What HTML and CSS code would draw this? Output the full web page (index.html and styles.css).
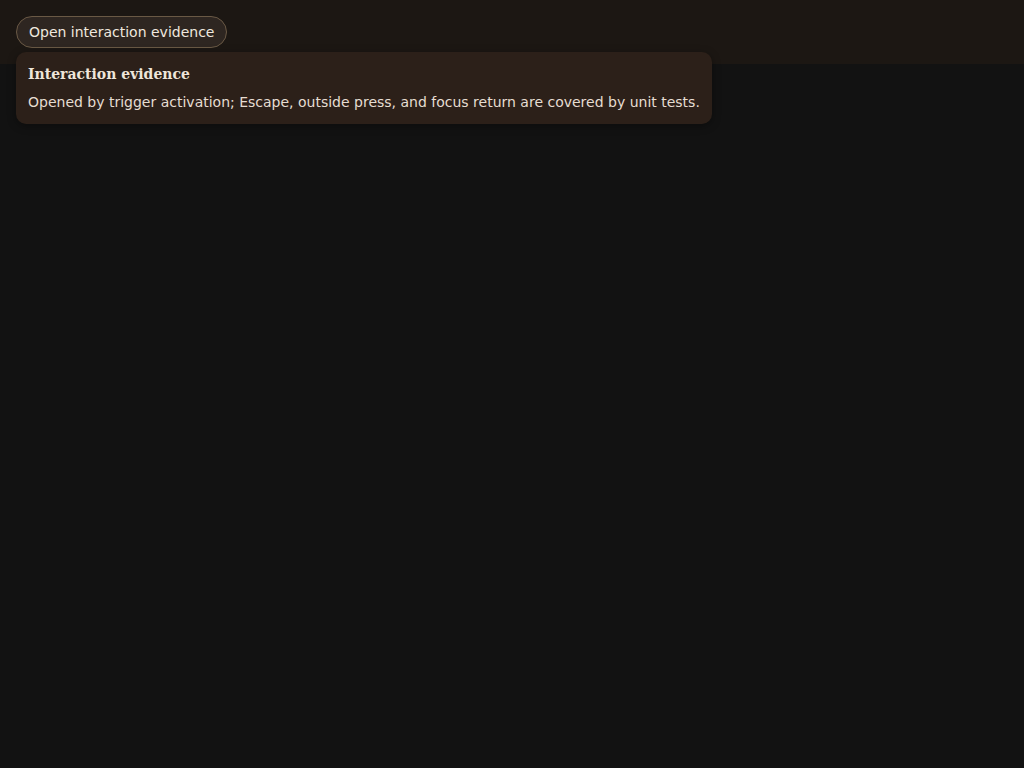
FILE: index.html
```html
<!DOCTYPE html>
<html lang="en">
<head>
<meta charset="utf-8">
<title>Interaction evidence</title>
<link rel="stylesheet" href="styles.css">
</head>
<body>
<header class="bar">
  <div class="anchor">
    <button class="trigger" type="button" aria-expanded="true">Open interaction evidence</button>
    <div class="popover" role="dialog">
      <h2 class="popover-title">Interaction evidence</h2>
      <p class="popover-text">Opened by trigger activation; Escape, outside press, and focus return are covered by unit tests.</p>
    </div>
  </div>
</header>
</body>
</html>
```
FILE: styles.css
```css
html, body {
  margin: 0;
  padding: 0;
  background: #121212;
  height: 100%;
  font-family: "DejaVu Sans", sans-serif;
  color: #ece4da;
}
.bar {
  background: #1c1713;
  height: 64px;
  box-sizing: border-box;
  padding: 16px;
}
.anchor {
  position: relative;
  display: inline-block;
}
.trigger {
  display: block;
  height: 32px;
  box-sizing: border-box;
  padding: 0 12px;
  border: 1px solid #6a5945;
  border-radius: 999px;
  background: #2e2621;
  color: #efe8df;
  font-family: "DejaVu Sans", sans-serif;
  font-size: 14px;
  line-height: 30px;
  cursor: pointer;
}
.popover {
  position: absolute;
  top: 36px;
  left: 0;
  width: max-content;
  padding: 12px;
  background: #2c2019;
  border-radius: 10px;
  box-shadow: 0 2px 8px rgba(0, 0, 0, 0.35);
}
.popover-title {
  margin: 0 0 8px;
  font-family: "DejaVu Serif", serif;
  font-weight: bold;
  font-size: 14px;
  line-height: 20px;
  color: #efe6da;
}
.popover-text {
  margin: 0;
  font-size: 14px;
  line-height: 20px;
  color: #e6ddd2;
}
```
